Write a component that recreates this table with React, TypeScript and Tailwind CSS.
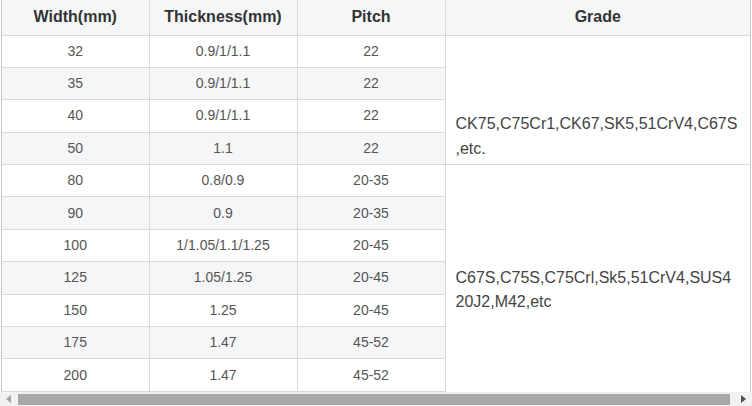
import React from "react";

const rows = [
  ["32", "0.9/1/1.1", "22"],
  ["35", "0.9/1/1.1", "22"],
  ["40", "0.9/1/1.1", "22"],
  ["50", "1.1", "22"],
  ["80", "0.8/0.9", "20-35"],
  ["90", "0.9", "20-35"],
  ["100", "1/1.05/1.1/1.25", "20-45"],
  ["125", "1.05/1.25", "20-45"],
  ["150", "1.25", "20-45"],
  ["175", "1.47", "45-52"],
  ["200", "1.47", "45-52"],
];

export default function App() {
  return (
    <div
      className="w-[752px] h-[406px] bg-white overflow-hidden"
      style={{ fontFamily: '"Liberation Sans", Arial, sans-serif' }}
    >
      <div className="ml-px w-[750px] border-l border-r border-[#c9c9c9] overflow-hidden">
        <table className="w-[748px] table-fixed border-collapse">
          <colgroup>
            <col className="w-[147px]" />
            <col className="w-[148px]" />
            <col className="w-[148px]" />
            <col className="w-[305px]" />
          </colgroup>
          <thead>
            <tr className="h-[35px] bg-[#f5f6f8]">
              {["Width(mm)", "Thickness(mm)", "Pitch", "Grade"].map((h) => (
                <th
                  key={h}
                  className="border border-[#d9d9d9] border-t-0 first:border-l-0 last:border-r-0 text-[16px] font-bold text-[#333] text-center p-0"
                >
                  {h}
                </th>
              ))}
            </tr>
          </thead>
          <tbody>
            {rows.map((r, i) => (
              <tr
                key={i}
                className={`h-[32.4px] ${i % 2 === 1 ? "bg-[#f5f6f8]" : "bg-white"}`}
              >
                {r.map((c, j) => (
                  <td
                    key={j}
                    className={`border border-[#d9d9d9] ${j === 0 ? "border-l-0" : ""} text-[14px] text-[#555] text-center p-0`}
                  >
                    {c}
                  </td>
                ))}
                {i === 0 && (
                  <td
                    rowSpan={4}
                    className="border border-[#d9d9d9] border-r-0 bg-white align-top pt-[75px] pl-[10px] pr-[4px] text-[16px] leading-[25px] text-[#444] whitespace-nowrap overflow-hidden"
                  >
                    CK75,C75Cr1,CK67,SK5,51CrV4,C67S
                    <br />
                    ,etc.
                  </td>
                )}
                {i === 4 && (
                  <td
                    rowSpan={7}
                    className="border border-[#d9d9d9] border-r-0 border-b-0 bg-white align-middle pl-[10px] pr-[4px] text-[16px] leading-[24px] text-[#444] whitespace-nowrap overflow-hidden"
                  >
                    <br />
                    C67S,C75S,C75Crl,Sk5,51CrV4,SUS4
                    <br />
                    20J2,M42,etc
                  </td>
                )}
              </tr>
            ))}
          </tbody>
        </table>
      </div>
      {/* horizontal scrollbar */}
      <div className="flex h-[15px] w-[752px] items-stretch bg-[#f1f1f1]">
        <div className="flex w-[17px] items-center justify-center">
          <svg width="5" height="8" viewBox="0 0 5 8">
            <path d="M5 0 L0 4 L5 8 Z" fill="#a3a3a3" />
          </svg>
        </div>
        <div className="my-[2px] ml-px w-[712px] bg-[#a8a8a8]" />
        <div className="flex-1" />
        <div className="flex w-[17px] items-center justify-center">
          <svg width="5" height="8" viewBox="0 0 5 8">
            <path d="M0 0 L5 4 L0 8 Z" fill="#505050" />
          </svg>
        </div>
      </div>
    </div>
  );
}
